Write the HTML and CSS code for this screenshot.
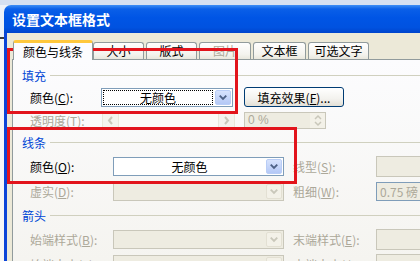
FILE: index.html
```html
<!DOCTYPE html>
<html lang="zh-CN">
<head>
    <meta charset="UTF-8">
    <title>设置文本框格式</title>
    <link rel="stylesheet" href="styles.css">
</head>
<body>
    <div class="screen">
        <div class="dialog">
            <div class="titlebar">设置文本框格式</div>
            <div class="frame">
                <div class="tabs">
                    <div class="tab tab-active">颜色与线条</div>
                    <div class="tab tab-w2">大小</div>
                    <div class="tab tab-w2b">版式</div>
                    <div class="tab tab-w2c tab-off">图片</div>
                    <div class="tab tab-w3">文本框</div>
                    <div class="tab tab-w4">可选文字</div>
                </div>
                <div class="panel">
                    <!-- 填充 -->
                    <div class="group">填充</div>
                    <div class="row row-fill">
                        <span class="label label-fill">颜色(<u>C</u>):</span>
                        <div class="combo combo-fill">
                            <span class="combo-text"><span class="focus">无颜色</span></span>
                            <span class="combo-btn">
                                <svg width="15" height="15" viewBox="0 0 15 15"><path d="M4 5.5 L7.5 9 L11 5.5" fill="none" stroke="#4d6185" stroke-width="2"/></svg>
                            </span>
                        </div>
                        <button class="btn">填充效果(<u>F</u>)...</button>
                    </div>
                    <div class="row row-fill">
                        <span class="label label-fill off">透明度(<u>T</u>):</span>
                        <div class="scroll">
                            <span class="sbtn"><svg width="15" height="15" viewBox="0 0 15 15"><path d="M9 4 L6 7.5 L9 11" fill="none" stroke="#c9c7ba" stroke-width="2"/></svg></span>
                            <span class="track"></span>
                            <span class="sbtn"><svg width="15" height="15" viewBox="0 0 15 15"><path d="M6 4 L9 7.5 L6 11" fill="none" stroke="#c9c7ba" stroke-width="2"/></svg></span>
                        </div>
                        <div class="spin">
                            <span class="spin-text">0 %</span>
                            <span class="spin-btns">
                                <svg width="14" height="15" viewBox="0 0 14 15"><path d="M4 6 L7 3 L10 6 M4 9 L7 12 L10 9" fill="none" stroke="#c9c7ba" stroke-width="1.5"/></svg>
                            </span>
                        </div>
                    </div>

                    <!-- 线条 -->
                    <div class="group group-line">线条</div>
                    <div class="row row-line">
                        <span class="label">颜色(<u>O</u>):</span>
                        <div class="combo combo-line">
                            <span class="combo-text">无颜色</span>
                            <span class="combo-btn">
                                <svg width="15" height="15" viewBox="0 0 15 15"><path d="M4 5.5 L7.5 9 L11 5.5" fill="none" stroke="#4d6185" stroke-width="2"/></svg>
                            </span>
                        </div>
                        <span class="label label-right off">线型(<u>S</u>):</span>
                        <div class="field"></div>
                    </div>
                    <div class="row row-line">
                        <span class="label off">虚实(<u>D</u>):</span>
                        <div class="combo combo-line combo-off">
                            <span class="combo-text"></span>
                            <span class="combo-btn">
                                <svg width="15" height="15" viewBox="0 0 15 15"><path d="M4 5.5 L7.5 9 L11 5.5" fill="none" stroke="#c9c7ba" stroke-width="2"/></svg>
                            </span>
                        </div>
                        <span class="label label-right off">粗细(<u>W</u>):</span>
                        <div class="field field-blue">0.75 磅</div>
                    </div>

                    <!-- 箭头 -->
                    <div class="group group-arrow">箭头</div>
                    <div class="row row-line">
                        <span class="label off">始端样式(<u>B</u>):</span>
                        <div class="combo combo-line combo-off">
                            <span class="combo-text"></span>
                            <span class="combo-btn">
                                <svg width="15" height="15" viewBox="0 0 15 15"><path d="M4 5.5 L7.5 9 L11 5.5" fill="none" stroke="#c9c7ba" stroke-width="2"/></svg>
                            </span>
                        </div>
                        <span class="label label-right off">末端样式(<u>E</u>):</span>
                        <div class="field"></div>
                    </div>
                    <div class="row row-line">
                        <span class="label off">始端大小(<u>Z</u>):</span>
                        <div class="combo combo-line combo-off">
                            <span class="combo-text"></span>
                            <span class="combo-btn"></span>
                        </div>
                        <span class="label label-right off">末端大小(<u>I</u>):</span>
                        <div class="field"></div>
                    </div>
                </div>
            </div>
        </div>

        <!-- 红色标注框 -->
        <div class="mark mark-fill"></div>
        <div class="mark mark-line"></div>
    </div>
</body>
</html>
```

FILE: styles.css
```css
body {
    margin: 0;
    font-family: "Noto Sans CJK SC", "Liberation Sans", sans-serif;
    font-size: 12px;
    color: #000;
    overflow: hidden;
    background: linear-gradient(to bottom, #d5e0f1 0 5px, #eef2f8 5px 37px, #3c3c3c 37px 39px, #f7f7f7 39px);
}
.screen {
    position: relative;
    width: 420px;
    height: 261px;
    overflow: hidden;
}
.dialog {
    margin: 5px 0 0 4px;
    width: 480px;
}
.titlebar {
    height: 28px;
    line-height: 28px;
    padding-left: 8px;
    border-radius: 7px 7px 0 0;
    background: linear-gradient(to bottom, #3d8ef6 0, #0a5fe8 4px, #0055e5 45%, #0052e0 80%, #0044cc 100%);
    color: #fff;
    font-size: 14px;
    font-weight: bold;
    letter-spacing: 0;
}
.frame {
    background: #ece9d8;
    border-left: 3px solid #0b44d8;
    padding: 7px 0 0 5px;
    height: 240px;
}

/* 选项卡 */
.tabs {
    display: flex;
    align-items: flex-end;
    height: 19px;
    padding-left: 1px;
}
.tab {
    box-sizing: border-box;
    height: 17px;
    line-height: 15px;
    text-align: center;
    border: 1px solid #919b9c;
    border-bottom: none;
    border-radius: 3px 3px 0 0;
    background: linear-gradient(to bottom, #fefefe, #f4f3ee 70%, #e9e7dd);
    margin-left: 2px;
}
.tab-active {
    position: relative;
    z-index: 1;
    width: 80px;
    height: 20px;
    line-height: 18px;
    margin: 0 0 -1px 0;
    background: #fcfcfe;
    border-top: 3px solid #ffc83c;
}
.tab-w2 { width: 51px; margin-left: 0; }
.tab-w2b { width: 51px; }
.tab-w2c { width: 52px; }
.tab-w3 { width: 53px; }
.tab-w4 { width: 61px; }
.tab-off { color: #aca899; }

.panel {
    border: 1px solid #919b9c;
    background: linear-gradient(to bottom, #fcfcfe, #f4f3ee);
    height: 220px;
    padding-top: 7px;
}

/* 分组标题 */
.group {
    display: flex;
    align-items: center;
    height: 16px;
    padding-left: 9px;
    color: #0046d5;
}
.group::after {
    content: "";
    flex: 1;
    border-top: 1px solid #d0d0bf;
    margin-left: 4px;
}
.group-line { margin-top: 4px; }
.group-arrow { margin-top: 6px; }

.row {
    display: flex;
    align-items: center;
    height: 20px;
    padding-left: 17px;
}
.group + .row-fill { margin-top: 4px; }
.row-fill + .row-fill { margin-top: 3px; }
.group + .row-line { margin-top: 6px; }
.row-line + .row-line { margin-top: 5px; }

.label {
    width: 83px;
    flex: none;
    white-space: nowrap;
}
.label-fill { width: 71px; }
.label-right {
    width: 83px;
    margin-left: 9px;
}
.off { color: #aca899; }

/* 下拉框 */
.combo {
    box-sizing: border-box;
    display: flex;
    height: 19px;
    border: 1px solid #7f9db9;
    background: #fff;
    flex: none;
}
.combo-fill { width: 132px; }
.combo-line { width: 171px; height: 19px; }
.combo-text {
    flex: 1;
    display: flex;
    align-items: center;
    justify-content: center;
    padding: 1px;
}
.focus {
    display: flex;
    align-items: center;
    justify-content: center;
    width: 100%;
    height: 100%;
    box-sizing: border-box;
    border: 1px dotted #000;
}
.combo-btn {
    box-sizing: border-box;
    width: 16px;
    margin: 1px;
    border: 1px solid #b9cdf6;
    border-radius: 2px;
    background: linear-gradient(to bottom, #d7e3fd, #b4c8f6);
    display: flex;
    align-items: center;
    justify-content: center;
}
.combo-off {
    border-color: #c9c7ba;
    background: #eeece1;
}
.combo-off .combo-btn {
    border-color: #e3e0d3;
    background: #f3f1e8;
}

.btn {
    box-sizing: border-box;
    width: 100px;
    height: 20px;
    margin-left: 11px;
    padding: 0;
    font: inherit;
    color: #000;
    border: 1px solid #003c74;
    border-radius: 3px;
    background: linear-gradient(to bottom, #ffffff, #f3f2ee 60%, #e3e0d6);
}

/* 滚动条与微调框 */
.scroll {
    box-sizing: border-box;
    display: flex;
    width: 133px;
    height: 17px;
    margin-left: 1px;
    background: #f4f3ee;
}
.sbtn {
    box-sizing: border-box;
    width: 17px;
    border: 1px solid #e8e6da;
    border-radius: 2px;
    background: #f4f3ee;
    display: flex;
    align-items: center;
    justify-content: center;
}
.track {
    flex: 1;
    background: #fbfaf6;
}
.spin {
    box-sizing: border-box;
    display: flex;
    width: 82px;
    height: 17px;
    margin-left: 9px;
    border: 1px solid #c9c7ba;
    background: #eeece1;
}
.spin-text {
    flex: 1;
    padding-left: 3px;
    line-height: 15px;
    color: #aca899;
    font-family: "Liberation Sans", sans-serif;
}
.spin-btns {
    width: 15px;
    display: flex;
    align-items: center;
    justify-content: center;
    background: #f3f1e8;
}

.field {
    box-sizing: border-box;
    width: 60px;
    height: 21px;
    flex: none;
    border: 1px solid #c9c7ba;
    background: #eeece1;
}
.field-blue {
    height: 19px;
    border-color: #7f9db9;
    color: #aca899;
    padding-left: 3px;
    line-height: 17px;
    white-space: nowrap;
}

/* 标注 */
.mark {
    position: absolute;
    box-sizing: border-box;
    border: 3px solid #e2141c;
}
.mark-fill {
    left: 7px;
    top: 48px;
    width: 231px;
    height: 66px;
}
.mark-line {
    left: 7px;
    top: 127px;
    width: 290px;
    height: 57px;
}
```
